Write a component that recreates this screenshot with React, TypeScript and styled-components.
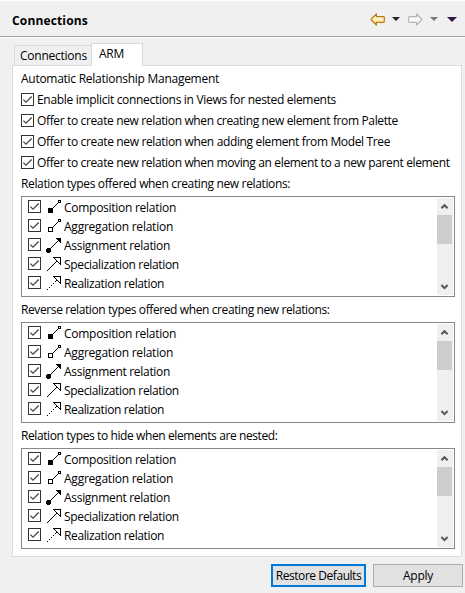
import React from "react";
import styled, { createGlobalStyle } from "styled-components";

const GlobalStyle = createGlobalStyle`
  * { box-sizing: border-box; }
  body { margin: 0; background: #f0f0f0; }
  svg { flex: none; }
`;

const Page = styled.div`
  width: 465px;
  height: 593px;
  overflow: hidden;
  background: #f0f0f0;
  border-top: 1px solid #fff;
  color: #000;
  font: 12px/16px "Open Sans", "Noto Sans", sans-serif;
  white-space: nowrap;
`;

const Label = styled.span<{ $spacing?: number }>`
  letter-spacing: ${(p) => p.$spacing ?? -0.24}px;
`;

const Header = styled.header`
  height: 37px;
  display: flex;
  align-items: center;
  justify-content: space-between;
  padding: 1px 8px 0 12px;
  border-bottom: 1px solid #fff;
  box-shadow: inset 0 -1px 0 #a0a0a0;
`;

const Title = styled.h1`
  margin: 2px 0 0;
  font-size: 12px;
  line-height: 16px;
  font-weight: 700;
  letter-spacing: 0.15px;
`;

const Tools = styled.div`
  display: flex;
  align-items: center;
  margin-bottom: 1px;
`;

const Tabs = styled.div`
  display: flex;
  align-items: flex-end;
  height: 27px;
  padding-left: 14px;
`;

const Tab = styled.div<{ $active?: boolean }>`
  width: ${(p) => (p.$active ? 52 : 77)}px;
  height: ${(p) => (p.$active ? 23 : 20)}px;
  margin-bottom: ${(p) => (p.$active ? -1 : 0)}px;
  padding: ${(p) => (p.$active ? "2px 0 0 7px" : "2px 0 0 5px")};
  background: ${(p) => (p.$active ? "#fff" : "#f0f0f0")};
  border: 1px solid #d9d9d9;
  border-bottom: 0;
  border-right-width: ${(p) => (p.$active ? 1 : 0)}px;
`;

const Panel = styled.main`
  width: 450px;
  height: 492px;
  margin-left: 12px;
  padding: 5px 6px 0 8px;
  background: #fff;
  border: 1px solid #dcdcdc;
`;

const Caption = styled.div`
  height: 16px;
`;

const Options = styled.div`
  padding-top: 2px;
`;

const Option = styled.label`
  display: flex;
  align-items: center;
  gap: 3px;
  height: 21px;
`;

const Group = styled.section`
  height: 126px;
  padding-top: 3px;
`;

const List = styled.div`
  display: flex;
  justify-content: space-between;
  width: 434px;
  height: 101px;
  margin-top: 4px;
  padding: 1px 1px 1px 6px;
  border: 1px solid #828790;
`;

const Row = styled.div`
  display: flex;
  align-items: flex-start;
  height: 19px;
  padding-top: 2px;

  svg + svg { margin-left: 5px; }
  span { margin: 0 0 0 2px; }
`;

const ScrollBar = styled.div`
  display: flex;
  flex-direction: column;
  width: 16px;
  height: 97px;
  background: #f0f0f0;
`;

const Thumb = styled.div`
  width: 15px;
  height: 29px;
  background: #cdcdcd;
  margin-bottom: auto;
`;

const Footer = styled.footer`
  display: flex;
  justify-content: flex-end;
  gap: 7px;
  padding: 7px 2px 0 0;
`;

const Button = styled.button<{ $primary?: boolean }>`
  width: ${(p) => (p.$primary ? 95 : 90)}px;
  height: 23px;
  padding: 0;
  color: #000;
  background: #e1e1e1;
  border: ${(p) => (p.$primary ? "2px solid #0078d7" : "1px solid #adadad")};
  font: inherit;
`;

const Check = () => (
  <svg width="13" height="13" viewBox="0 0 13 13">
    <rect x=".5" y=".5" width="12" height="12" fill="#fff" stroke="#333" />
    <path d="M2.4 6.6 5 9.2 10.7 3.5" fill="none" stroke="#444" strokeWidth="1.25" />
  </svg>
);

const Arrow = ({ forward }: { forward?: boolean }) => (
  <svg width="15" height="13" viewBox="0 0 15 13">
    <defs>
      <linearGradient id="gold" x1="0" y1="0" x2="0" y2="1">
        <stop offset="0" stopColor="#fffdf0" />
        <stop offset="1" stopColor="#ffe08a" />
      </linearGradient>
    </defs>
    <path
      transform={forward ? "translate(15 0) scale(-1 1)" : undefined}
      d="M.9 6.5 6.4 1v2.7h7.1q.8 0 .8.8v4q0 .8-.8.8H6.4V12Z"
      fill={forward ? "#f8f8f8" : "url(#gold)"}
      stroke={forward ? "#b4b4b4" : "#b87a16"}
      strokeWidth="1.2"
      strokeLinejoin="round"
    />
  </svg>
);

const Caret = styled.span<{ $color: string; $left: number; $large?: boolean }>`
  width: 0;
  margin-left: ${(p) => p.$left}px;
  border: ${(p) => (p.$large ? 5 : 4)}px solid transparent;
  border-top-color: ${(p) => p.$color};
  border-bottom: 0;
`;

const Gap = styled.span`
  width: 8px;
`;

type Kind = "Composition" | "Aggregation" | "Assignment" | "Specialization" | "Realization";

const RelationIcon = ({ kind }: { kind: Kind }) => (
  <svg width="16" height="16" viewBox="0 0 16 16" shapeRendering="crispEdges">
    {(kind === "Composition" || kind === "Aggregation") && (
      <>
        <rect x="2.5" y="8.5" width="4" height="4" fill={kind === "Composition" ? "#000" : "#fff"} stroke="#000" />
        <path d="M7 7h1v1H7zM8 6h1v1H8zM9 5h1v1H9zM10 4h1v1h-1zM11 3h1v1h-1z" />
        <path d="M12.5.5h2v2h-2z" fill="#fff" stroke="#000" />
      </>
    )}
    {kind === "Assignment" && (
      <>
        <path d="M1 10h3v1h1v3H4v1H1v-1H0v-3h1zM10 0h5v5h-1V4h-1V3h-1V2h-1V1h-1z" />
        {[4, 5, 6, 7, 8, 9, 10, 11].map((x) => (
          <rect key={x} x={x} y={14 - x} width="1" height="1" />
        ))}
      </>
    )}
    {(kind === "Specialization" || kind === "Realization") && (
      <>
        <path d="M7 .5h7.5V8L11 4.3Z" fill="#fff" stroke="none" />
        <path d="M7 0h8v8h-1V1H7zM8 1h1v1H8zM9 2h1v1H9zM10 3h1v1h-1zM11 4h1v1h-1zM12 5h1v1h-1zM13 6h1v1h-1z" />
        {Array.from({ length: 10 }, (_, i) => i)
          .filter((i) => kind === "Specialization" || i % 2 === 0 || i === 9)
          .map((i) => (
            <rect key={i} x={1 + i} y={13 - i} width="1" height="1" />
          ))}
      </>
    )}
  </svg>
);

const Chevron = ({ down }: { down?: boolean }) => (
  <svg width="16" height="17" viewBox="0 0 16 17">
    <path d={down ? "M4.4 7 7.5 10.1 10.6 7" : "M4.4 10.3 7.5 7.2 10.6 10.3"} fill="none" stroke="#555" strokeWidth="2" />
  </svg>
);

const options: [string, number][] = [
  ["Enable implicit connections in Views for nested elements", -0.31],
  ["Offer to create new relation when creating new element from Palette", -0.36],
  ["Offer to create new relation when adding element from Model Tree", -0.355],
  ["Offer to create new relation when moving an element to a new parent element", -0.36],
];

const relations: [Kind, number][] = [
  ["Composition", -0.27],
  ["Aggregation", -0.23],
  ["Assignment", -0.3],
  ["Specialization", -0.34],
  ["Realization", -0.37],
];

const groups: [string, number][] = [
  ["Relation types offered when creating new relations:", -0.35],
  ["Reverse relation types offered when creating new relations:", -0.395],
  ["Relation types to hide when elements are nested:", -0.4],
];

export default function App() {
  return (
    <Page>
      <GlobalStyle />
      <Header>
        <Title>Connections</Title>
        <Tools>
          <Arrow />
          <Caret $color="#222" $left={7} />
          <Gap />
          <Arrow forward />
          <Caret $color="#777" $left={7} />
          <Caret $color="#2d1744" $left={9} $large />
        </Tools>
      </Header>
      <Tabs>
        <Tab><Label>Connections</Label></Tab>
        <Tab $active><Label>ARM</Label></Tab>
      </Tabs>
      <Panel>
        <Caption><Label $spacing={-0.27}>Automatic Relationship Management</Label></Caption>
        <Options>
          {options.map(([text, spacing]) => (
            <Option key={text}>
              <Check />
              <Label $spacing={spacing}>{text}</Label>
            </Option>
          ))}
        </Options>
        {groups.map(([text, spacing]) => (
          <Group key={text}>
            <Caption><Label $spacing={spacing}>{text}</Label></Caption>
            <List>
              <div>
                {relations.map(([kind, gap]) => (
                  <Row key={kind}>
                    <Check />
                    <RelationIcon kind={kind} />
                    <Label $spacing={gap}>{kind} relation</Label>
                  </Row>
                ))}
              </div>
              <ScrollBar>
                <Chevron />
                <Thumb />
                <Chevron down />
              </ScrollBar>
            </List>
          </Group>
        ))}
      </Panel>
      <Footer>
        <Button $primary><Label $spacing={-0.45}>Restore Defaults</Label></Button>
        <Button><Label>Apply</Label></Button>
      </Footer>
    </Page>
  );
}
